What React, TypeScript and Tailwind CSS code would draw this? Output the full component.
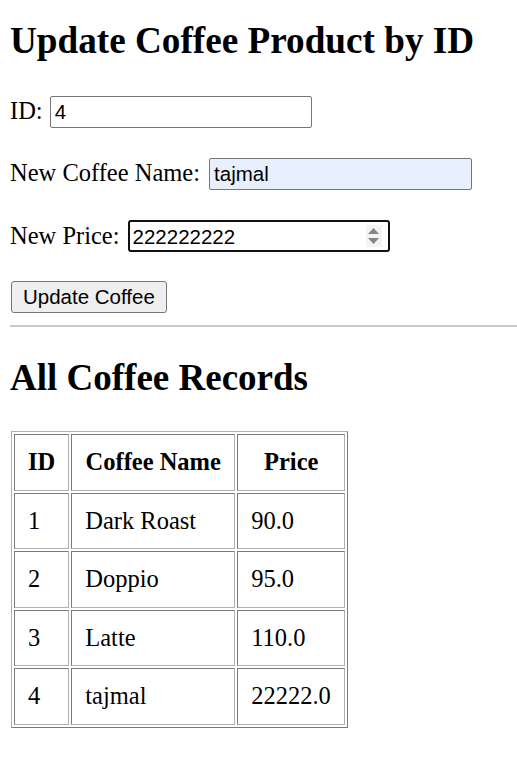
import React from "react";

const rows = [
  { id: 1, name: "Dark Roast", price: "90.0" },
  { id: 2, name: "Doppio", price: "95.0" },
  { id: 3, name: "Latte", price: "110.0" },
  { id: 4, name: "tajmal", price: "22222.0" },
];

const cell =
  "h-[56.5px] border border-t-[#7a7a7a] border-l-[#7a7a7a] border-r-[#b0b0b0] border-b-[#b0b0b0] px-[13px] leading-[28px]";

export default function App() {
  return (
    <div className="min-h-screen bg-white px-[10px] text-[24.5px] text-black font-['Liberation_Serif',serif]">
      <h1 className="pt-[20px] text-[37.2px] font-bold leading-[42px] whitespace-nowrap">Update Coffee Product by ID</h1>

      <div className="mt-[34px] flex items-baseline gap-[7px] leading-[28px]">
        <label htmlFor="id">ID:</label>
        <input
          id="id"
          defaultValue="4"
          className="h-[32px] w-[262px] rounded-[2px] border border-[#767676] px-[4px] text-[20.5px] font-['Liberation_Sans',sans-serif] outline-none"
        />
      </div>

      <div className="mt-[30px] flex items-baseline gap-[9px] leading-[28px]">
        <label htmlFor="name">New Coffee Name:</label>
        <input
          id="name"
          defaultValue="tajmal"
          className="h-[32px] w-[263px] rounded-[2px] border border-[#767676] bg-[#e8f0fe] px-[4px] text-[20.5px] font-['Liberation_Sans',sans-serif] outline-none"
        />
      </div>

      <div className="mt-[30px] flex items-baseline gap-[8px] leading-[28px]">
        <label htmlFor="price">New Price:</label>
        <div className="relative h-[32px] w-[262px] rounded-[3px] border-2 border-[#101010]">
          <input
            id="price"
            defaultValue="222222222"
            className="h-full w-full px-[3px] text-[20.5px] font-['Liberation_Sans',sans-serif] outline-none"
          />
          <div className="absolute right-[6px] top-[3px] flex h-[22px] w-[16px] flex-col items-center justify-center gap-[4px] bg-[#f3f3f3]">
            <svg width="11" height="6" viewBox="0 0 11 6">
              <path d="M5.5 0 L11 6 L0 6 Z" fill="#858585" />
            </svg>
            <svg width="11" height="6" viewBox="0 0 11 6">
              <path d="M0 0 L11 0 L5.5 6 Z" fill="#858585" />
            </svg>
          </div>
        </div>
      </div>

      <div className="mt-[29px] flex pl-[1px]">
        <button className="h-[32px] rounded-[3px] border border-[#767676] bg-[#efefef] px-[11px] text-[20.5px] font-['Liberation_Sans',sans-serif]">
          Update Coffee
        </button>
      </div>

      <hr className="mt-[12px] -mr-[10px] border-t-2 border-[#c8c8c8]" />

      <h2 className="mt-[30px] text-[37px] font-bold leading-[42px]">All Coffee Records</h2>

      <table className="mt-[32px] ml-[1px] border-separate border-spacing-[2px] border border-t-[#b0b0b0] border-l-[#b0b0b0] border-r-[#7a7a7a] border-b-[#7a7a7a]">
        <thead>
          <tr>
            <th className={`${cell} w-[54px] text-center`}>ID</th>
            <th className={`${cell} w-[164px] text-center`}>Coffee Name</th>
            <th className={`${cell} w-[108px] text-center`}>Price</th>
          </tr>
        </thead>
        <tbody>
          {rows.map((r) => (
            <tr key={r.id}>
              <td className={cell}>{r.id}</td>
              <td className={cell}>{r.name}</td>
              <td className={cell}>{r.price}</td>
            </tr>
          ))}
        </tbody>
      </table>
    </div>
  );
}
